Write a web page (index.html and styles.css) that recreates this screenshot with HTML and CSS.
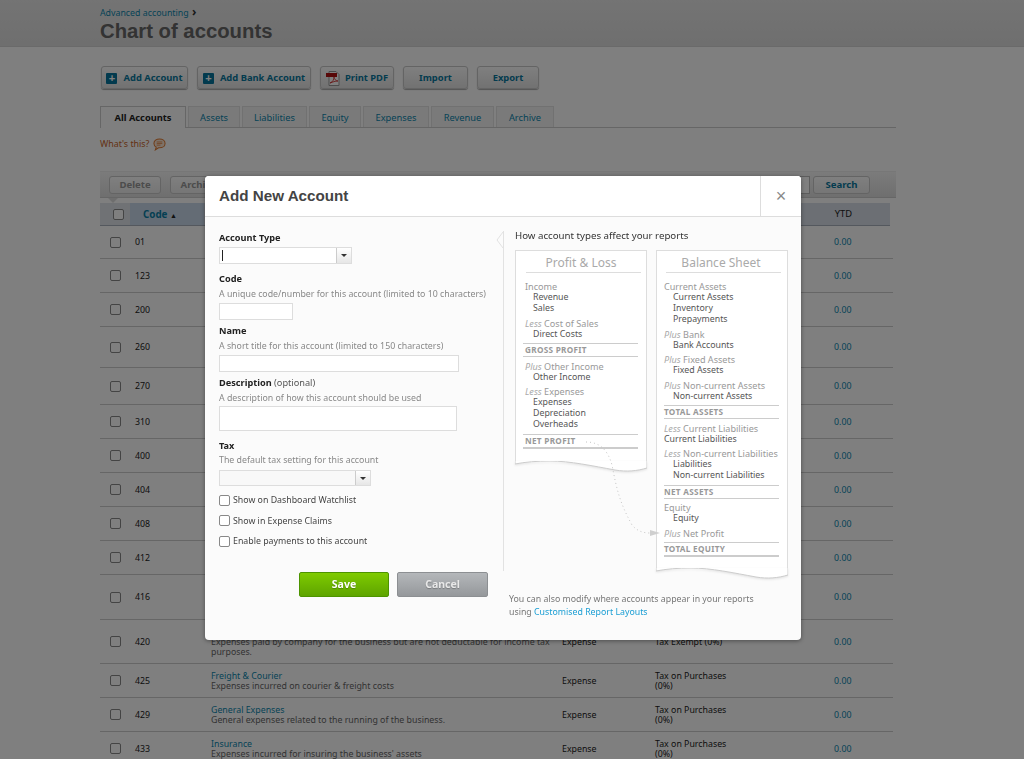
FILE: index.html
```html
<!DOCTYPE html>
<html lang="en">
<head>
  <meta charset="UTF-8">
  <title>Chart of accounts</title>
  <link rel="stylesheet" href="styles.css">
</head>
<body>
  <header class="page-head">
    <div class="crumb"><a href="#">Advanced accounting</a> <b>›</b></div>
    <h1>Chart of accounts</h1>
  </header>

  <main class="page">
    <div class="actions">
      <a class="btn btn-add" href="#"><span class="plus">+</span>Add Account</a>
      <a class="btn btn-bank" href="#"><span class="plus">+</span>Add Bank Account</a>
      <a class="btn btn-pdf" href="#">
        <svg class="pdf" viewBox="0 0 14 15" width="14" height="15">
          <path d="M3 .5h7l3 3v11H3z" fill="#fff" stroke="#999"/>
          <rect x="0" y="2" width="11" height="4" fill="#b01010"/>
          <path d="M4 12c3-1 4-4 4-6 0 2 2 4 4 4-3 0-5 1-8 2z" fill="none" stroke="#c22" stroke-width=".8"/>
        </svg>Print PDF</a>
      <a class="btn btn-import" href="#">Import</a>
      <a class="btn btn-export" href="#">Export</a>
    </div>

    <nav class="tabs">
      <a class="tab tab-all active" href="#">All Accounts</a>
      <a class="tab tab-assets" href="#">Assets</a>
      <a class="tab tab-liab" href="#">Liabilities</a>
      <a class="tab tab-equity" href="#">Equity</a>
      <a class="tab tab-exp" href="#">Expenses</a>
      <a class="tab tab-rev" href="#">Revenue</a>
      <a class="tab tab-arch" href="#">Archive</a>
    </nav>

    <div class="whats">What's this?
      <svg viewBox="0 0 14 14" width="13" height="13">
        <path d="M7 1c3.300 0 6 1.900 6 4.800S10.300 10.500 7 10.500H6L2.500 12.800l1-3C2 9 1 7.600 1 5.800 1 2.900 3.700 1 7 1z" fill="#fbe6d4" stroke="#e07a30" stroke-width="1.100"/>
        <path d="M4 4.300h6M4 6h6M4 7.700h4" stroke="#e07a30" stroke-width=".8"/>
      </svg>
    </div>

    <div class="toolbar">
      <a class="tool tool-del" href="#">Delete</a>
      <a class="tool tool-arch" href="#">Archive</a>
      <a class="tool tool-tax" href="#"></a>
      <span class="search-box"></span>
      <a class="tool tool-search" href="#">Search</a>
    </div>

    <div class="grid-head">
      <span class="head-check"><i class="check"></i></span>
      <span class="head-code">Code <small>▲</small></span>
      <span class="head-rest">YTD</span>
    </div>

    <div class="row h33"><i class="check"></i><span class="code">01</span><span></span><span></span><span></span><a class="ytd" href="#">0.00</a></div>
    <div class="row"><i class="check"></i><span class="code">123</span><span></span><span></span><span></span><a class="ytd" href="#">0.00</a></div>
    <div class="row"><i class="check"></i><span class="code">200</span><span></span><span></span><span></span><a class="ytd" href="#">0.00</a></div>
    <div class="row h42"><i class="check"></i><span class="code">260</span><span></span><span></span><span></span><a class="ytd" href="#">0.00</a></div>
    <div class="row h36"><i class="check"></i><span class="code">270</span><span></span><span></span><span></span><a class="ytd" href="#">0.00</a></div>
    <div class="row"><i class="check"></i><span class="code">310</span><span></span><span></span><span></span><a class="ytd" href="#">0.00</a></div>
    <div class="row"><i class="check"></i><span class="code">400</span><span></span><span></span><span></span><a class="ytd" href="#">0.00</a></div>
    <div class="row"><i class="check"></i><span class="code">404</span><span></span><span></span><span></span><a class="ytd" href="#">0.00</a></div>
    <div class="row"><i class="check"></i><span class="code">408</span><span></span><span></span><span></span><a class="ytd" href="#">0.00</a></div>
    <div class="row"><i class="check"></i><span class="code">412</span><span></span><span></span><span></span><a class="ytd" href="#">0.00</a></div>
    <div class="row h45"><i class="check"></i><span class="code">416</span><span></span><span></span><span></span><a class="ytd" href="#">0.00</a></div>
    <div class="row h44"><i class="check"></i><span class="code">420</span>
      <span class="name"><a href="#">Entertainment</a><br>Expenses paid by company for the business but are not deductable for income tax purposes.</span>
      <span>Expense</span><span>Tax Exempt (0%)</span><a class="ytd" href="#">0.00</a></div>
    <div class="row"><i class="check"></i><span class="code">425</span>
      <span class="name"><a href="#">Freight &amp; Courier</a><br>Expenses incurred on courier &amp; freight costs</span>
      <span>Expense</span><span>Tax on Purchases<br>(0%)</span><a class="ytd" href="#">0.00</a></div>
    <div class="row"><i class="check"></i><span class="code">429</span>
      <span class="name"><a href="#">General Expenses</a><br>General expenses related to the running of the business.</span>
      <span>Expense</span><span>Tax on Purchases<br>(0%)</span><a class="ytd" href="#">0.00</a></div>
    <div class="row"><i class="check"></i><span class="code">433</span>
      <span class="name"><a href="#">Insurance</a><br>Expenses incurred for insuring the business' assets</span>
      <span>Expense</span><span>Tax on Purchases<br>(0%)</span><a class="ytd" href="#">0.00</a></div>
  </main>

  <div class="overlay"></div>

  <section class="modal">
    <div class="modal-head">
      <h2>Add New Account</h2>
      <button class="close">×</button>
    </div>
    <div class="modal-body">
      <form class="form">
        <div class="field first">
          <label>Account Type</label>
          <div class="combo combo-type"><span class="caret"></span><span class="drop"></span></div>
        </div>
        <div class="field">
          <label>Code</label>
          <p class="hint">A unique code/number for this account (limited to 10 characters)</p>
          <input class="input input-code" type="text">
        </div>
        <div class="field">
          <label>Name</label>
          <p class="hint">A short title for this account (limited to 150 characters)</p>
          <input class="input input-name" type="text">
        </div>
        <div class="field">
          <label>Description <em>(optional)</em></label>
          <p class="hint">A description of how this account should be used</p>
          <textarea class="input input-desc"></textarea>
        </div>
        <div class="field field-tax">
          <label>Tax</label>
          <p class="hint">The default tax setting for this account</p>
          <div class="combo combo-tax"><span class="drop"></span></div>
        </div>
        <div class="opt opt-1"><i class="check"></i>Show on Dashboard Watchlist</div>
        <div class="opt"><i class="check"></i>Show in Expense Claims</div>
        <div class="opt"><i class="check"></i>Enable payments to this account</div>
        <div class="form-btns">
          <a class="big big-save" href="#">Save</a>
          <a class="big big-cancel" href="#">Cancel</a>
        </div>
      </form>

      <aside class="help">
        <h3>How account types affect your reports</h3>
        <div class="papers">
          <div class="paper paper-pl">
            <h4>Profit &amp; Loss</h4>
            <p class="grp">Income</p>
            <p class="item">Revenue</p>
            <p class="item">Sales</p>
            <p class="grp gap"><em>Less</em> Cost of Sales</p>
            <p class="item">Direct Costs</p>
            <p class="total">GROSS PROFIT</p>
            <p class="grp"><em>Plus</em> Other Income</p>
            <p class="item">Other Income</p>
            <p class="grp gap"><em>Less</em> Expenses</p>
            <p class="item">Expenses</p>
            <p class="item">Depreciation</p>
            <p class="item">Overheads</p>
            <p class="total end">NET PROFIT</p>
            <svg class="wave" viewBox="0 0 132 12" preserveAspectRatio="none"><path d="M0 0H132V7C122 10 112 11 100 9 78 5 55 0 35 0 22 0 10 1 0 3z" fill="#fff"/><path d="M132 0V7C122 10 112 11 100 9 78 5 55 0 35 0 22 0 10 1 0 3V0" fill="none" stroke="#ccc"/></svg>
          </div>
          <div class="paper paper-bs">
            <h4>Balance Sheet</h4>
            <p class="grp">Current Assets</p>
            <p class="item">Current Assets</p>
            <p class="item">Inventory</p>
            <p class="item">Prepayments</p>
            <p class="grp gap"><em>Plus</em> Bank</p>
            <p class="item">Bank Accounts</p>
            <p class="grp gap"><em>Plus</em> Fixed Assets</p>
            <p class="item">Fixed Assets</p>
            <p class="grp gap"><em>Plus</em> Non-current Assets</p>
            <p class="item">Non-current Assets</p>
            <p class="total">TOTAL ASSETS</p>
            <p class="grp"><em>Less</em> Current Liabilities</p>
            <p class="item flush">Current Liabilities</p>
            <p class="grp gap"><em>Less</em> Non-current Liabilities</p>
            <p class="item">Liabilities</p>
            <p class="item">Non-current Liabilities</p>
            <p class="total">NET ASSETS</p>
            <p class="grp">Equity</p>
            <p class="item">Equity</p>
            <p class="grp gap"><em>Plus</em> Net Profit</p>
            <p class="total end">TOTAL EQUITY</p>
            <svg class="wave" viewBox="0 0 132 12" preserveAspectRatio="none"><path d="M0 0H132V7C122 10 112 11 100 9 78 5 55 0 35 0 22 0 10 1 0 3z" fill="#fff"/><path d="M132 0V7C122 10 112 11 100 9 78 5 55 0 35 0 22 0 10 1 0 3V0" fill="none" stroke="#ccc"/></svg>
          </div>
        </div>
        <p class="note">You can also modify where accounts appear in your reports<br>using <a href="#">Customised Report Layouts</a></p>
        <svg class="arrow" viewBox="0 0 80 100" width="80" height="100">
          <path d="M1 1C12 1 22 6 27 24 32 50 35 62 47 84 52 90 58 92 65 92" fill="none" stroke="#c4c4c4" stroke-dasharray="1 3"/>
          <path d="M65 89l10 3-10 3z" fill="#cfcfcf"/>
        </svg>
        <svg class="notch" viewBox="0 0 8 16" width="8" height="16"><path d="M7 0L1 8l6 8" fill="#fbfbfb" stroke="#e2e2e2"/></svg>
      </aside>
    </div>
  </section>
</body>
</html>
```

FILE: styles.css
```css
* {
  box-sizing: border-box;
}
html, body {
  height: 100%;
  overflow: hidden;
}
body {
  margin: 0;
  background: #fff;
  color: #222;
  font-family: "Noto Sans", Tahoma, sans-serif;
  font-size: 8.8px;
  line-height: 10px;
}
a {
  color: #0a86ad;
  text-decoration: none;
}
p, h1, h2, h3, h4 {
  margin: 0;
}

/* page behind the dialog */
.page-head {
  height: 47px;
  padding: 7px 100px 0;
  background: linear-gradient(#e8e8e8, #dedede);
  border-bottom: 1px solid #d4d4d4;
}
.crumb {
  font-size: 8.800px;
  line-height: 12px;
}
.crumb b {
  margin-left: 1px;
  color: #333;
  font-size: 12px;
  line-height: 10px;
}
h1 {
  font: bold 20.300px/24px "Liberation Sans", Arial, sans-serif;
  color: #666;
}
.page {
  padding: 19px 0 0 100px;
  width: 896px;
}
.actions {
  display: flex;
  gap: 9px;
  padding-left: 1px;
}
.btn {
  display: flex;
  align-items: center;
  justify-content: center;
  height: 23px;
  padding-top: 1px;
  background: linear-gradient(#fff, #e4e4e4);
  border: 1px solid #c8c8c8;
  border-radius: 3px;
  box-shadow: 0 1px 1px rgba(0,0,0,.35);
  font-weight: 700;
  font-size: 9.400px;
  color: #08789e;
}
.btn-add { width: 87px; }
.btn-bank { width: 114px; }
.btn-pdf { width: 74px; }
.btn-import { width: 65px; }
.btn-export { width: 62px; }
.plus {
  width: 11px;
  height: 11px;
  margin-right: 6px;
  background: #05759c;
  border-radius: 1px;
  color: #fff;
  font: bold 11px/10px "Liberation Sans", sans-serif;
  text-align: center;
}
.pdf {
  margin-right: 5px;
}
.tabs {
  display: flex;
  gap: 2px;
  height: 22px;
  margin-top: 17px;
  border-bottom: 1px solid #ccc;
}
.tab {
  height: 21px;
  padding-top: 6px;
  text-align: center;
  background: #f5f5f5;
  border: 1px solid #e2e2e2;
  border-bottom: 0;
  font-size: 9.300px;
}
.tab.active {
  height: 22px;
  background: #fff;
  border-color: #ccc;
  color: #222;
  font-weight: 700;
}
.tab-all { width: 86px; }
.tab-assets { width: 52px; }
.tab-liab { width: 65px; }
.tab-equity { width: 52px; }
.tab-exp { width: 66px; }
.tab-rev { width: 63px; }
.tab-arch { width: 58px; }
.whats {
  display: flex;
  align-items: center;
  gap: 4px;
  height: 14px;
  margin-top: 9px;
  color: #c9642a;
  font-size: 8.900px;
}
.toolbar {
  position: relative;
  display: flex;
  align-items: center;
  height: 27px;
  margin-top: 20px;
  padding-left: 9px;
  gap: 9px;
  background: linear-gradient(#f7f7f7, #dedede);
  border-top: 1px solid #eee;
  border-bottom: 1px solid #ccc;
}
.tool {
  height: 18px;
  padding-top: 3px;
  text-align: center;
  background: linear-gradient(#fff, #ececec);
  border: 1px solid #c8c8c8;
  border-radius: 3px;
  font-weight: 700;
  font-size: 9.600px;
  color: #999;
}
.tool-del { width: 52px; }
.tool-arch { width: 57px; }
.tool-tax { width: 102px; }
.search-box {
  width: 100px;
  height: 18px;
  margin-left: auto;
  background: #fff;
  border: 1px solid #bbb;
}
.tool-search {
  width: 57px;
  margin-left: -6px;
  margin-right: 26px;
  color: #08789e;
}
.toolbar::after {
  content: "";
  position: absolute;
  left: 8px;
  bottom: -6px;
  border: 5px solid transparent;
  border-top-color: #ddd;
  border-bottom: 0;
}
.grid-head {
  display: flex;
  align-items: center;
  width: 790px;
  height: 23px;
  margin-top: 5px;
  background: #d8dfe8;
  border-bottom: 1px solid #a8b0bc;
}
.head-check {
  display: flex;
  width: 30px;
  padding-left: 13px;
  align-items: center;
  height: 100%;
  background: #e0e4ea;
}
.head-code {
  width: 74px;
  height: 100%;
  padding: 7px 0 0 13px;
  background: #c9d9ea;
  color: #0a7ea6;
  font-weight: 700;
  font-size: 9.800px;
}
.head-code small {
  color: #222;
  font-size: 7px;
}
.head-rest {
  flex: 1;
  padding-right: 38px;
  text-align: right;
  font-size: 9.400px;
}
.check {
  display: block;
  flex: none;
  width: 11px;
  height: 11px;
  background: #fff;
  border: 1px solid #888;
  border-radius: 2px;
}
.row {
  display: grid;
  grid-template-columns: 25px 76px 351px 93px 179px 1fr;
  align-items: center;
  width: 793px;
  height: 34px;
  padding-left: 10px;
  border-bottom: 1px solid #ccc;
  color: #222;
}
.h33 { height: 33px; }
.h36 { height: 37px; }
.h42 { height: 41px; }
.h44 { height: 44px; }
.h45 { height: 45px; }
.name {
  padding-right: 8px;
  color: #666;
}
.ytd {
  color: #0a86ad;
}

.overlay {
  position: fixed;
  inset: 0;
  background: rgba(0,0,0,.5);
}

/* dialog */
.modal {
  position: absolute;
  left: 205px;
  top: 176px;
  width: 596px;
  height: 464px;
  background: #fbfbfb;
  border-radius: 4px;
  box-shadow: 0 1px 4px rgba(0,0,0,.4);
  overflow: hidden;
}
.modal-head {
  display: flex;
  align-items: center;
  justify-content: space-between;
  height: 41px;
  padding-left: 14px;
  background: #fff;
  border-bottom: 1px solid #ddd;
}
h2 {
  font: bold 15.200px/20px "Liberation Sans", Arial, sans-serif;
  color: #444;
}
.close {
  width: 41px;
  height: 40px;
  border: 0;
  border-left: 1px solid #ddd;
  background: #fff;
  color: #888;
  font: 18px/18px "Liberation Sans", sans-serif;
}
.modal-body {
  display: flex;
  height: 423px;
}
.form {
  width: 298px;
  padding: 14px 0 0 14px;
}
.field {
  margin-top: 4.500px;
}
.field.first {
  margin-top: 0;
  margin-bottom: 8px;
}
.field-tax {
  margin-top: 8px;
}
.field label {
  display: block;
  font-size: 9.200px;
  font-weight: 700;
  line-height: 13px;
  color: #222;
}
.field em {
  font-style: normal;
  font-weight: 400;
  color: #555;
}
.hint {
  margin-top: 1.500px;
  line-height: 14px;
  color: #888;
}
.input {
  display: block;
  margin: 2px 0 0;
  background: #fff;
  border: 1px solid #ddd;
  border-radius: 0;
  padding: 0;
  resize: none;
}
.input-code { width: 74px; height: 17px; }
.input-name { width: 240px; height: 17px; }
.input-desc { width: 238px; height: 25px; margin-top: 1px; }
.combo {
  position: relative;
  height: 17px;
  margin-top: 3px;
  background: #fff;
  border: 1px solid #ddd;
}
.combo-type { width: 133px; }
.combo-tax { width: 152px; height: 16px; background: #f8f8f8; }
.drop {
  position: absolute;
  right: 0;
  top: 0;
  bottom: 0;
  width: 15px;
  background: linear-gradient(#fff, #e6e6e6);
  border-left: 1px solid #ccc;
}
.drop::after {
  content: "";
  position: absolute;
  left: 4px;
  top: 6px;
  border: 3px solid transparent;
  border-top: 3px solid #333;
  border-bottom: 0;
}
.caret {
  position: absolute;
  left: 2px;
  top: 2px;
  width: 1px;
  height: 11px;
  background: #222;
}
.opt {
  display: flex;
  align-items: center;
  gap: 3px;
  height: 12px;
  margin-top: 8.500px;
  color: #444;
}
.opt-1 {
  margin-top: 8px;
}
.form-btns {
  display: flex;
  gap: 8px;
  margin: 25px 0 0 80px;
}
.big {
  width: 90px;
  height: 25px;
  text-align: center;
  border-radius: 2px;
  font: bold 10.500px/23px "Noto Sans", sans-serif;
  color: #fff;
  text-shadow: 0 1px 1px rgba(0,0,0,.25);
}
.big-save {
  background: linear-gradient(#7fcb00, #5ea400);
  border: 1px solid #4d9400;
}
.big-cancel {
  width: 91px;
  background: linear-gradient(#b4b7ba, #95989b);
  border: 1px solid #8c8f92;
  color: #e8e8e8;
}

.help {
  position: relative;
  width: 298px;
  padding: 0 0 0 12px;
}
.help::before {
  content: "";
  position: absolute;
  left: 0;
  top: 14px;
  height: 340px;
  border-left: 1px solid #e2e2e2;
}
.notch {
  position: absolute;
  left: -7px;
  top: 15px;
}
h3 {
  font-weight: 400;
  font-size: 9.700px;
  line-height: 14px;
  padding-top: 12px;
  color: #333;
  height: 33px;
}
.papers {
  display: flex;
  align-items: flex-start;
  gap: 9px;
  height: 336px;
}
.paper {
  position: relative;
  width: 132px;
  padding-top: 5px;
  background: #fff;
  border: 1px solid #ddd;
  border-bottom: 0;
  font-size: 8.800px;
  line-height: 11px;
  color: #555;
}
.paper-pl {
  padding: 5px 5px 8.500px 9px;
}
.paper-bs {
  padding: 5px 6px 7px 7px;
}
.wave {
  position: absolute;
  left: -1px;
  top: 100%;
  width: 132px;
  height: 12px;
  filter: drop-shadow(0 1px 1px rgba(0,0,0,.1));
}
h4 {
  margin: 0 0 8px 1px;
  padding: 0 5px 3px 0;
  border-bottom: 1px solid #ddd;
  text-align: center;
  font-weight: 400;
  font-size: 12px;
  line-height: 13px;
  color: #aaa;
}
.paper-bs h4 {
  margin-left: 2px;
}
.grp {
  font-size: 9.100px;
  color: #999;
}
.grp em {
  color: #aaa;
}
.grp.gap {
  margin-top: 3.500px;
}
.item {
  padding-left: 8px;
  color: #555;
}
.paper-bs .item {
  padding-left: 9px;
}
.paper-bs .item.flush {
  padding-left: 0;
}
.total {
  margin: 3.500px 3px 3.500px -2px;
  padding: 1px 0 1px 2px;
  border-top: 1px solid #ccc;
  border-bottom: 1px solid #ccc;
  font-weight: 700;
  font-size: 8.200px;
  line-height: 10px;
  letter-spacing: .3px;
  color: #999;
}
.paper-bs .total {
  margin: 3.500px 2px 3.500px 0;
  padding-left: 0;
}
.total.end {
  border-bottom-width: 2px;
}
.note {
  margin: 7px 0 0 -6px;
  line-height: 13px;
  color: #777;
}
.note a {
  color: #1a9ed4;
}
.arrow {
  position: absolute;
  left: 82px;
  top: 224px;
}
```
